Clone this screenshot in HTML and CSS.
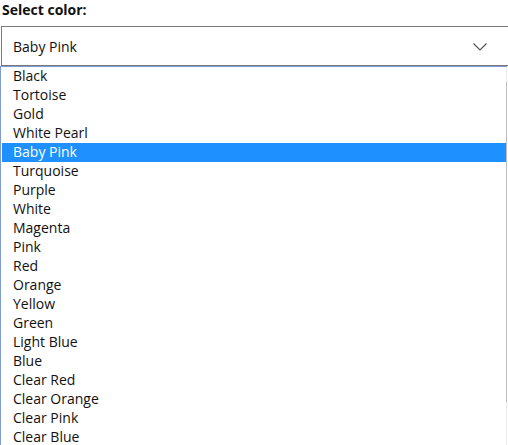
FILE: index.html
```html
<!DOCTYPE html>
<html>
<head>
<meta charset="utf-8">
<link rel="stylesheet" href="styles.css">
</head>
<body>
<div class="page">
  <label class="label">Select color:</label>
  <div class="select">
    <span class="value">Baby Pink</span>
    <svg class="chev" width="16" height="10" viewBox="0 0 16 10"><path d="M1.5 1.5 L8 8 L14.5 1.5" fill="none" stroke="#555" stroke-width="1.2"/></svg>
  </div>
  <div class="list">
    <ul class="options">
      <li>Black</li>
      <li>Tortoise</li>
      <li>Gold</li>
      <li>White Pearl</li>
      <li class="active">Baby Pink</li>
      <li>Turquoise</li>
      <li>Purple</li>
      <li>White</li>
      <li>Magenta</li>
      <li>Pink</li>
      <li>Red</li>
      <li>Orange</li>
      <li>Yellow</li>
      <li>Green</li>
      <li>Light Blue</li>
      <li>Blue</li>
      <li>Clear Red</li>
      <li>Clear Orange</li>
      <li>Clear Pink</li>
      <li>Clear Blue</li>
    </ul>
    <div class="scrollbar"><div class="thumb"></div></div>
  </div>
</div>
</body>
</html>
```
FILE: styles.css
```css
html, body {
  margin: 0;
  padding: 0;
  background: #fff;
  overflow: hidden;
}
.page {
  width: 508px;
  height: 445px;
  overflow: hidden;
  font-family: "Open Sans", "Noto Sans", sans-serif;
  color: #111;
}
.label {
  display: block;
  font-weight: 700;
  font-size: 14px;
  line-height: 19px;
  padding: 0 0 0 2px;
  height: 26px;
}
.select {
  margin-left: 1px;
  width: 520px;
  height: 38px;
  border: 1px solid #7a7a7a;
  border-right: none;
  display: flex;
  align-items: center;
  box-sizing: content-box;
}
.value {
  font-size: 14px;
  padding-left: 11px;
  flex: 1;
}
.chev {
  margin-right: 34px;
  margin-top: 1px;
}
.list {
  width: 506px;
  border-left: 1px solid #7f9bd1;
  border-top: 1px solid #7f9bd1;
  display: flex;
  height: 400px;
}
.options {
  list-style: none;
  margin: 0;
  padding: 0;
  flex: 1;
}
.options li {
  font-size: 14px;
  height: 19px;
  line-height: 18px;
  padding-left: 11px;
  margin-left: 1px;
}
.options li.active {
  background: #1e90ff;
  color: #fff;
}
.scrollbar {
  width: 1px;
  background: #ececec;
  padding-top: 15px;
}
.thumb {
  height: 320px;
  background: #bdbdbd;
}
```
